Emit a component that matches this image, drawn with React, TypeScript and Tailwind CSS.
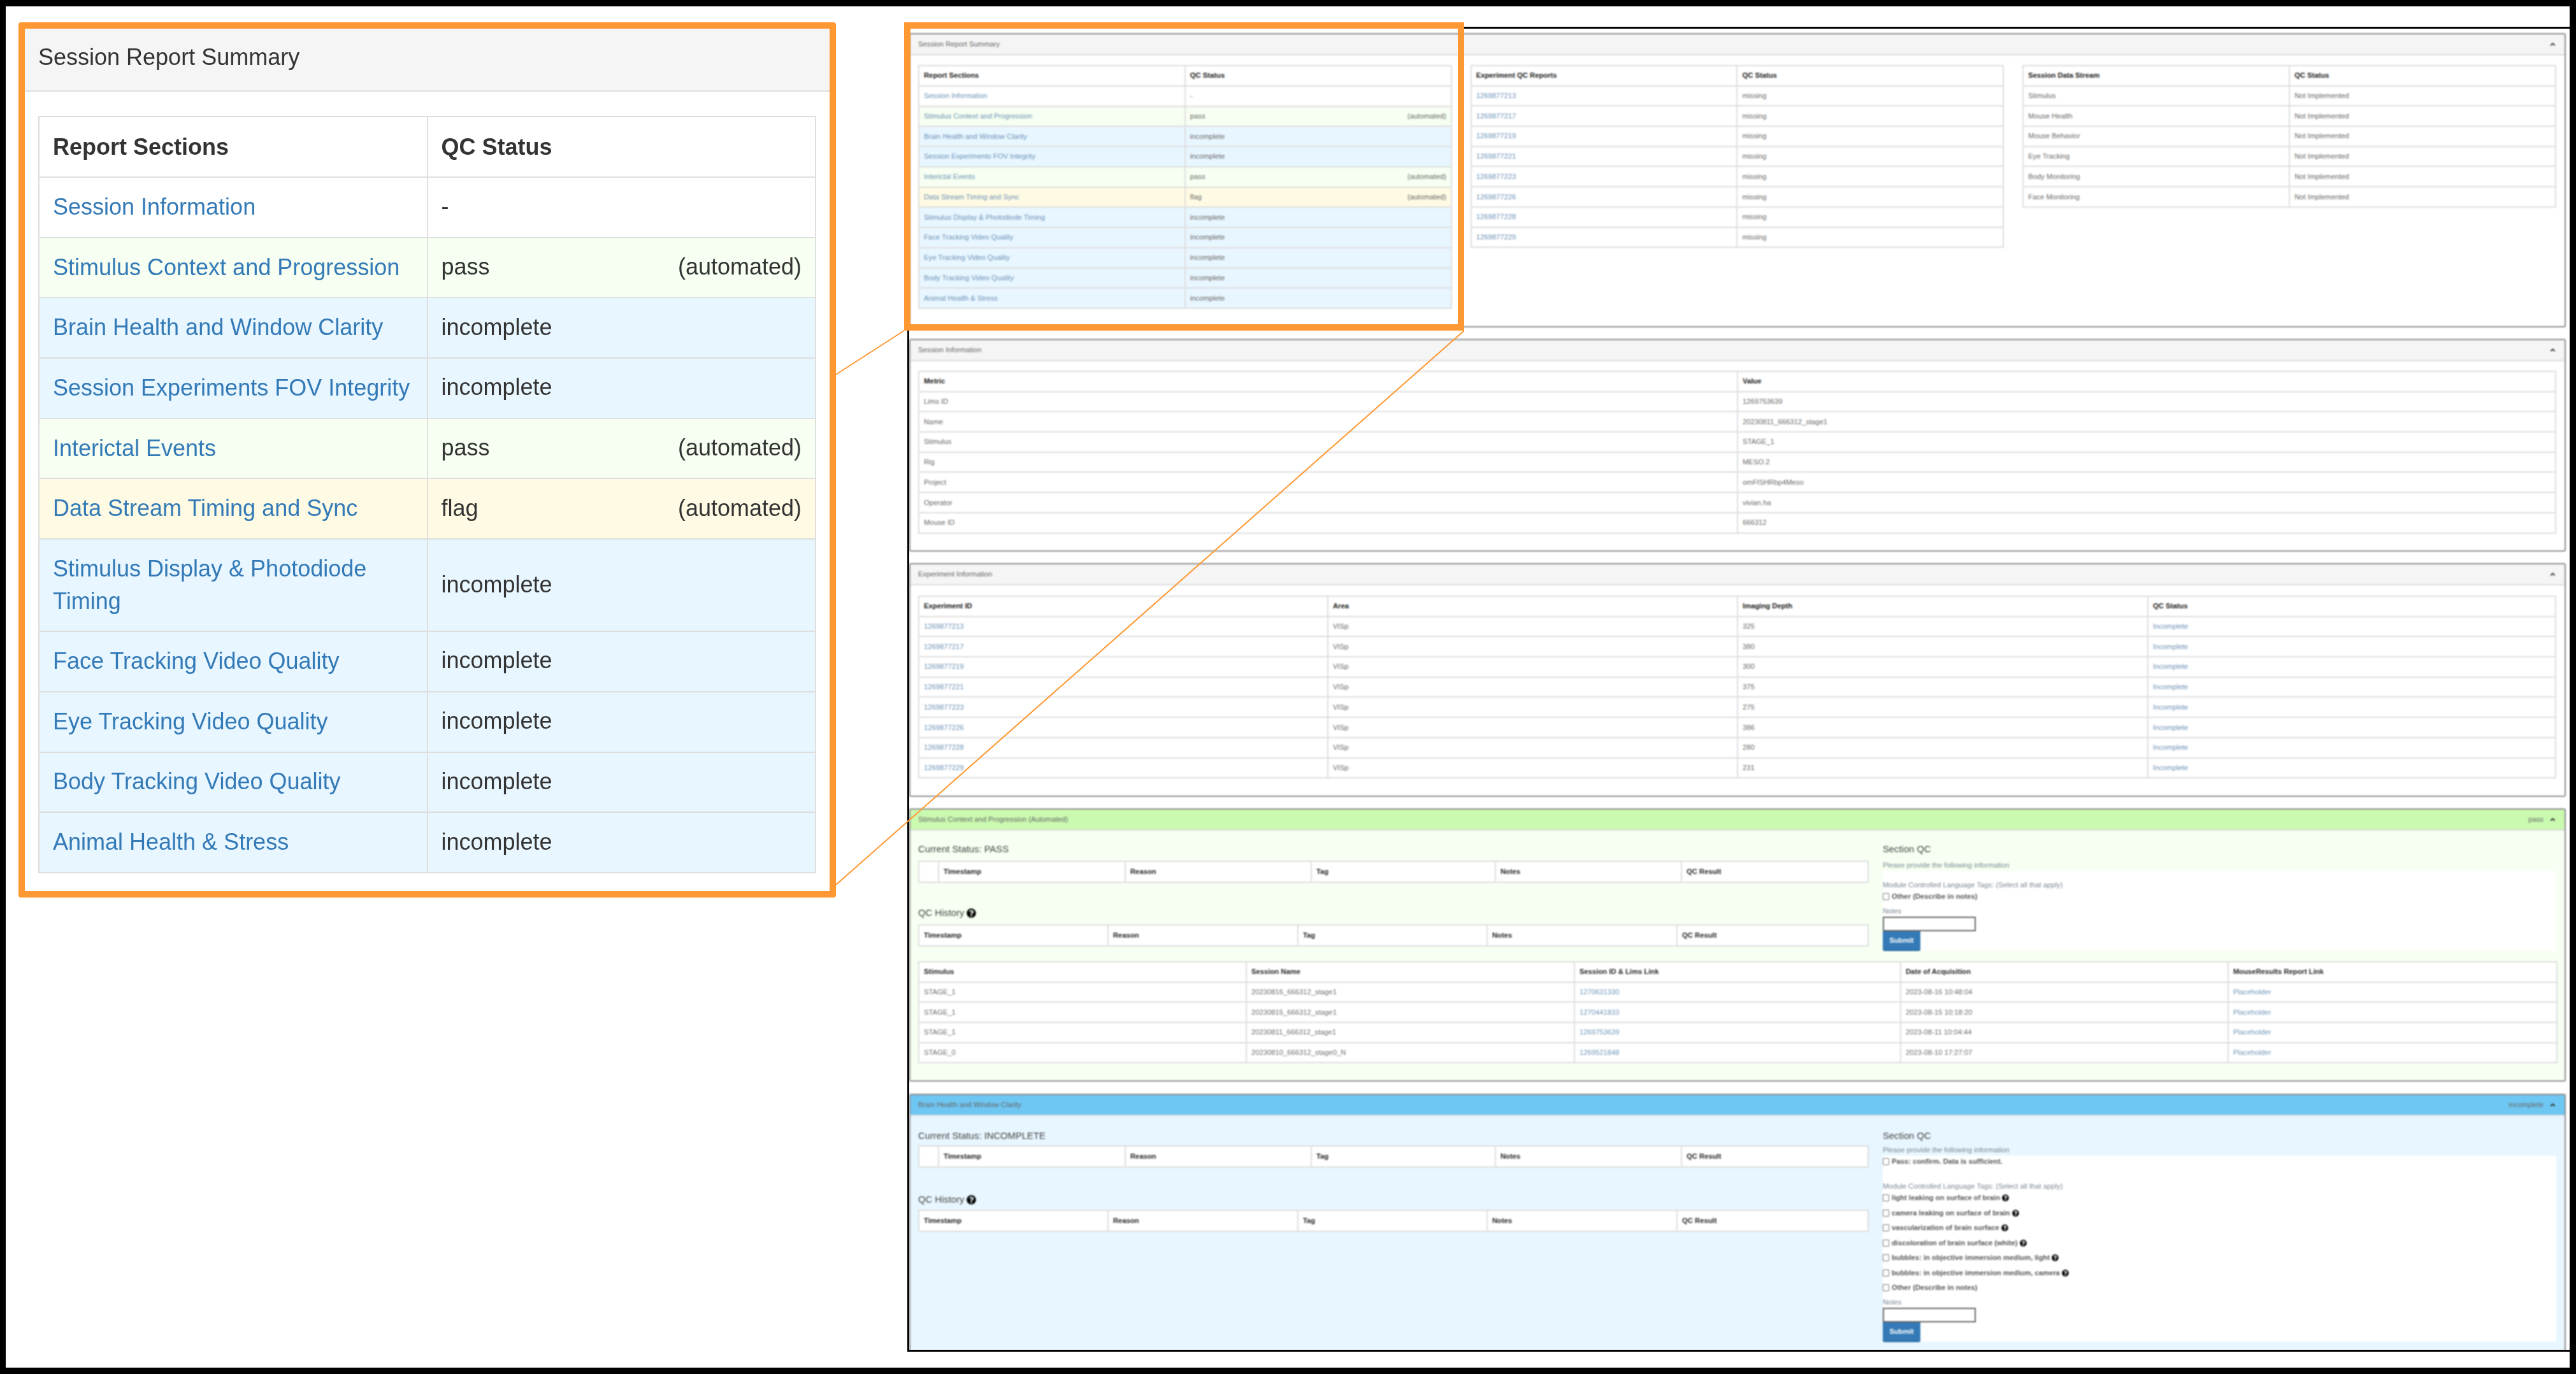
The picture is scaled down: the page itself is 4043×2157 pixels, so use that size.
import { ChevronUp } from 'lucide-react';
import { FaQuestionCircle } from 'react-icons/fa';

type Cell = { text: string; link?: boolean };

const link = (text: string): Cell => ({ text, link: true });

const summary = [
  { name: 'Session Information', status: '-', auto: false, row: 'bg-white' },
  { name: 'Stimulus Context and Progression', status: 'pass', auto: true, row: 'bg-[#f6fff1]' },
  { name: 'Brain Health and Window Clarity', status: 'incomplete', auto: false, row: 'bg-[#e8f6ff]' },
  { name: 'Session Experiments FOV Integrity', status: 'incomplete', auto: false, row: 'bg-[#e8f6ff]' },
  { name: 'Interictal Events', status: 'pass', auto: true, row: 'bg-[#f6fff1]' },
  { name: 'Data Stream Timing and Sync', status: 'flag', auto: true, row: 'bg-[#fefae3]' },
  { name: 'Stimulus Display & Photodiode Timing', status: 'incomplete', auto: false, row: 'bg-[#e8f6ff]' },
  { name: 'Face Tracking Video Quality', status: 'incomplete', auto: false, row: 'bg-[#e8f6ff]' },
  { name: 'Eye Tracking Video Quality', status: 'incomplete', auto: false, row: 'bg-[#e8f6ff]' },
  { name: 'Body Tracking Video Quality', status: 'incomplete', auto: false, row: 'bg-[#e8f6ff]' },
  { name: 'Animal Health & Stress', status: 'incomplete', auto: false, row: 'bg-[#e8f6ff]' },
];

const experiments = ['1269877213', '1269877217', '1269877219', '1269877221', '1269877223', '1269877226', '1269877228', '1269877229'];
const depths = ['325', '380', '300', '375', '275', '386', '280', '231'];
const qcHead = ['Timestamp', 'Reason', 'Tag', 'Notes', 'QC Result'];

const SummaryTable = ({ wide }: { wide: boolean }) => (
  <table className={`table-fixed border-collapse w-full ${wide ? 'text-[36px]' : 'text-[11.25px]'}`}>
    <thead>
      <tr className={wide ? 'h-[95px] text-[#333]' : 'h-[31.75px] text-[#222]'}>
        <th className={`${wide ? 'border-2 px-[21px]' : 'border-2 px-[7px]'} border-[#dedede] bg-white text-left font-bold w-1/2`}>Report Sections</th>
        <th className={`${wide ? 'border-2 px-[21px]' : 'border-2 px-[7px]'} border-[#dedede] bg-white text-left font-bold w-1/2`}>QC Status</th>
      </tr>
    </thead>
    <tbody>
      {summary.map((s) => (
        <tr key={s.name} className={`${s.row} ${wide ? (s.name.startsWith('Stimulus Display') ? 'h-[145px]' : 'h-[94.7px]') : 'h-[31.75px]'}`}>
          <td className={`${wide ? 'border-2 px-[21px] pb-[2px] leading-[51px] text-[#337ab7]' : 'border-2 px-[7px] text-[#6f95b8]'} border-[#dedede]`}>{s.name}</td>
          <td className={`${wide ? 'border-2 px-[21px] pb-[2px]' : 'border-2 px-[7px]'} border-[#dedede]`}>
            <div className="flex justify-between">
              <span>{s.status}</span>
              {s.auto && <span>(automated)</span>}
            </div>
          </td>
        </tr>
      ))}
    </tbody>
  </table>
);

// small report table, col classes are passed in so tailwind can see them
const Tbl = ({ cols, head, rows, rowH = 'h-[31.7px]' }: { cols: string[]; head: string[]; rows: Cell[][]; rowH?: string }) => (
  <table className="table-fixed border-collapse w-full bg-white text-[11.25px]">
    <colgroup>
      {cols.map((c, i) => (
        <col key={i} className={c} />
      ))}
    </colgroup>
    <thead>
      <tr className={rowH}>
        {head.map((h, i) => (
          <th key={i} className="border-2 border-[#dedede] px-[7px] text-left font-bold text-[#222]">
            {h}
          </th>
        ))}
      </tr>
    </thead>
    <tbody>
      {rows.map((r, i) => (
        <tr key={i} className={rowH}>
          {r.map((c, j) => (
            <td key={j} className={`border-2 border-[#dedede] px-[7px] ${c.link ? 'text-[#6f95b8]' : ''}`}>
              {c.text}
            </td>
          ))}
        </tr>
      ))}
    </tbody>
  </table>
);

const Panel = ({
  title,
  head = 'bg-[#f5f5f5]',
  body = 'bg-white',
  status,
  className,
  children,
}: {
  title: string;
  head?: string;
  body?: string;
  status?: string;
  className: string;
  children: React.ReactNode;
}) => (
  <section className={`border-2 border-[#8e8e8e] rounded-[3px] overflow-hidden flex flex-col ${body} ${className}`}>
    <header className={`${head} h-[33px] shrink-0 border-b-2 border-[#dedede] pl-[12px] pr-[13px] flex items-center justify-between`}>
      <span>{title}</span>
      <span className="flex items-center gap-[9px]">
        {status && <span>{status}</span>}
        <ChevronUp size={11} strokeWidth={4} className="text-[#333]" />
      </span>
    </header>
    {children}
  </section>
);

const Check = ({ label, hint, rowH = 'h-[23.5px]' }: { label: string; hint?: boolean; rowH?: string }) => (
  <label className={`flex items-center ${rowH} font-bold text-[#555]`}>
    <span className="w-[10px] h-[11px] border border-[#777] bg-white rounded-[1px] mr-[4px] shrink-0" />
    {label}
    {hint && <FaQuestionCircle size={11} className="ml-[3px] text-black" />}
  </label>
);

const StatusTables = ({ status, gapClass, historyGap }: { status: string; gapClass: string; historyGap: string }) => (
  <div className="w-[1490px] shrink-0">
    <h4 className={`text-[14.8px] leading-[18px] text-[#444] ${gapClass}`}>Current Status: {status}</h4>
    <Tbl
      cols={['w-[31px]', 'w-[293px]', 'w-[292px]', 'w-[289px]', 'w-[292px]', 'w-[293px]']}
      head={['', ...qcHead]}
      rows={[]}
      rowH="h-[33px]"
    />
    <h4 className={`text-[14.8px] leading-[18px] text-[#444] flex items-center gap-[4px] ${historyGap}`}>
      QC History <FaQuestionCircle size={15} className="text-black" />
    </h4>
    <Tbl
      cols={['w-[297px]', 'w-[298px]', 'w-[297px]', 'w-[298px]', 'w-[300px]']}
      head={qcHead}
      rows={[]}
      rowH="h-[33px]"
    />
  </div>
);

const NotesBox = () => (
  <>
    <div className="leading-[18px] text-[#7a8794] mt-[1px]">Notes</div>
    <div className="w-[146px] h-[23px] border-2 border-[#666] bg-white" />
    <button className="w-[59px] h-[31px] bg-[#337ab7] text-white font-bold rounded-b-[3px] border-b-2 border-[#2e6da4] block">Submit</button>
  </>
);

export default function App() {
  return (
    <div className="relative w-[4043px] h-[2157px] bg-white border-t-[10px] border-l-[9px] border-r-[10px] border-b-[10px] border-black flex text-[#333] font-['Liberation_Sans',Arial,sans-serif] overflow-hidden">
      {/* left enlarged callout */}
      <div className="w-[1415px] shrink-0 pl-[20px] pt-[25px]">
        <div className="w-[1283px] h-[1374px] border-[10px] border-[#fe9833] rounded-[4px] bg-white flex flex-col">
          <div className="h-[99px] shrink-0 bg-[#f5f5f5] border-b-2 border-[#dedede] pl-[21px] pb-[7px] flex items-center text-[36px] blur-[0.6px]">Session Report Summary</div>
          <div className="px-[21px] pt-[38px] blur-[0.6px]">
            <SummaryTable wide />
          </div>
        </div>
      </div>

      {/* full page screenshot */}
      <div className="w-[2609px] h-[2080px] mt-[32px] border-t-[3px] border-l-[3px] border-b-[3px] border-black text-[11.25px] text-[#6b6b6b] overflow-hidden">
        <div className="w-[2600px] pt-[7px] blur-[0.8px] flex flex-col">
          <Panel title="Session Report Summary" className="h-[462px]">
            <div className="grid grid-cols-3 gap-x-[29px] pl-[12px] pr-[13px] pt-[15px] items-start">
              <SummaryTable wide={false} />
              <Tbl
                cols={['w-1/2', 'w-1/2']}
                head={['Experiment QC Reports', 'QC Status']}
                rows={experiments.map((e) => [link(e), { text: 'missing' }])}
              />
              <Tbl
                cols={['w-1/2', 'w-1/2']}
                head={['Session Data Stream', 'QC Status']}
                rows={['Stimulus', 'Mouse Health', 'Mouse Behavior', 'Eye Tracking', 'Body Monitoring', 'Face Monitoring'].map((s) => [
                  { text: s },
                  { text: 'Not Implemented' },
                ])}
              />
            </div>
          </Panel>

          <Panel title="Session Information" className="h-[334px] mt-[18px]">
            <div className="pl-[12px] pr-[15px] pt-[15px]">
              <Tbl
                cols={['w-[1285px]', 'w-[1284px]']}
                head={['Metric', 'Value']}
                rows={[
                  ['Lims ID', '1269753639'],
                  ['Name', '20230811_666312_stage1'],
                  ['Stimulus', 'STAGE_1'],
                  ['Rig', 'MESO.2'],
                  ['Project', 'omFISHRbp4Meso'],
                  ['Operator', 'vivian.ha'],
                  ['Mouse ID', '666312'],
                ].map((r) => r.map((t) => ({ text: t })))}
              />
            </div>
          </Panel>

          <Panel title="Experiment Information" className="h-[367px] mt-[18px]">
            <div className="pl-[12px] pr-[15px] pt-[16px]">
              <Tbl
                cols={['w-[642px]', 'w-[643px]', 'w-[644px]', 'w-[640px]']}
                head={['Experiment ID', 'Area', 'Imaging Depth', 'QC Status']}
                rows={experiments.map((e, i) => [link(e), { text: 'VISp' }, { text: depths[i] }, link('Incomplete')])}
              />
            </div>
          </Panel>

          <Panel
            title="Stimulus Context and Progression (Automated)"
            status="pass"
            head="bg-[#caf9b0]"
            body="bg-[#f6fff1]"
            className="h-[429px] mt-[18px]"
          >
            <div className="pl-[12px] pr-[13px] pt-[20px]">
              <div className="flex gap-[24px] h-[169px]">
                <StatusTables status="PASS" gapClass="mb-[9px]" historyGap="mt-[38px] mb-[9px]" />
                <div className="flex-1">
                  <h4 className="text-[14.8px] leading-[18px] text-[#444] mb-[9px]">Section QC</h4>
                  <div className="leading-[14px] text-[#7a8794]">Please provide the following information</div>
                  <div className="bg-white h-[126px] mt-[2px] pt-[15px]">
                    <div className="leading-[14px] text-[#7a8794]">Module Controlled Language Tags: (Select all that apply)</div>
                    <Check label="Other (Describe in notes)" />
                    <NotesBox />
                  </div>
                </div>
              </div>
              <div className="mt-[16px]">
                <Tbl
                  cols={['w-[514px]', 'w-[515px]', 'w-[512px]', 'w-[514px]', 'w-[516px]']}
                  head={['Stimulus', 'Session Name', 'Session ID & Lims Link', 'Date of Acquisition', 'MouseResults Report Link']}
                  rows={[
                    ['STAGE_1', '20230816_666312_stage1', '1270631330', '2023-08-16 10:48:04'],
                    ['STAGE_1', '20230815_666312_stage1', '1270441833', '2023-08-15 10:18:20'],
                    ['STAGE_1', '20230811_666312_stage1', '1269753639', '2023-08-11 10:04:44'],
                    ['STAGE_0', '20230810_666312_stage0_N', '1269521848', '2023-08-10 17:27:07'],
                  ].map((r) => [...r.map((t, i) => (i === 2 ? link(t) : { text: t })), link('Placeholder')])}
                />
              </div>
            </div>
          </Panel>

          <Panel
            title="Brain Health and Window Clarity"
            status="incomplete"
            head="bg-[#6ec6f2]"
            body="bg-[#e8f6ff]"
            className="h-[410px] mt-[19px]"
          >
            <div className="pl-[12px] pr-[13px] pt-[22px] flex gap-[24px]">
              <StatusTables status="INCOMPLETE" gapClass="mb-[6px]" historyGap="mt-[41px] mb-[7px]" />
              <div className="flex-1">
                <h4 className="text-[14.8px] leading-[18px] text-[#444] mb-[6px]">Section QC</h4>
                <div className="leading-[14px] text-[#7a8794]">Please provide the following information</div>
                <div className="bg-white h-[292px] mt-[2px]">
                  <Check label="Pass: confirm. Data is sufficient." rowH="h-[18px]" />
                  <div className="leading-[14px] text-[#7a8794] mt-[23px]">Module Controlled Language Tags: (Select all that apply)</div>
                  <Check label="light leaking on surface of brain" hint />
                  <Check label="camera leaking on surface of brain" hint />
                  <Check label="vascularization of brain surface" hint />
                  <Check label="discoloration of brain surface (white)" hint />
                  <Check label="bubbles: in objective immersion medium, light" hint />
                  <Check label="bubbles: in objective immersion medium, camera" hint />
                  <Check label="Other (Describe in notes)" />
                  <NotesBox />
                </div>
              </div>
            </div>
          </Panel>
        </div>
      </div>

      {/* orange highlight and its connector lines sit on top of everything */}
      <div className="absolute left-[1410px] top-[25px] w-[879px] h-[484px] border-[10px] border-[#fe9833]" />
      <svg className="absolute left-0 top-0 pointer-events-none" width="4024" height="2137" viewBox="0 0 4024 2137" fill="none">
        <path d="M1303 578L1410 509M1303 1379L2289 509" stroke="#fe9833" strokeWidth="2" />
      </svg>
    </div>
  );
}
